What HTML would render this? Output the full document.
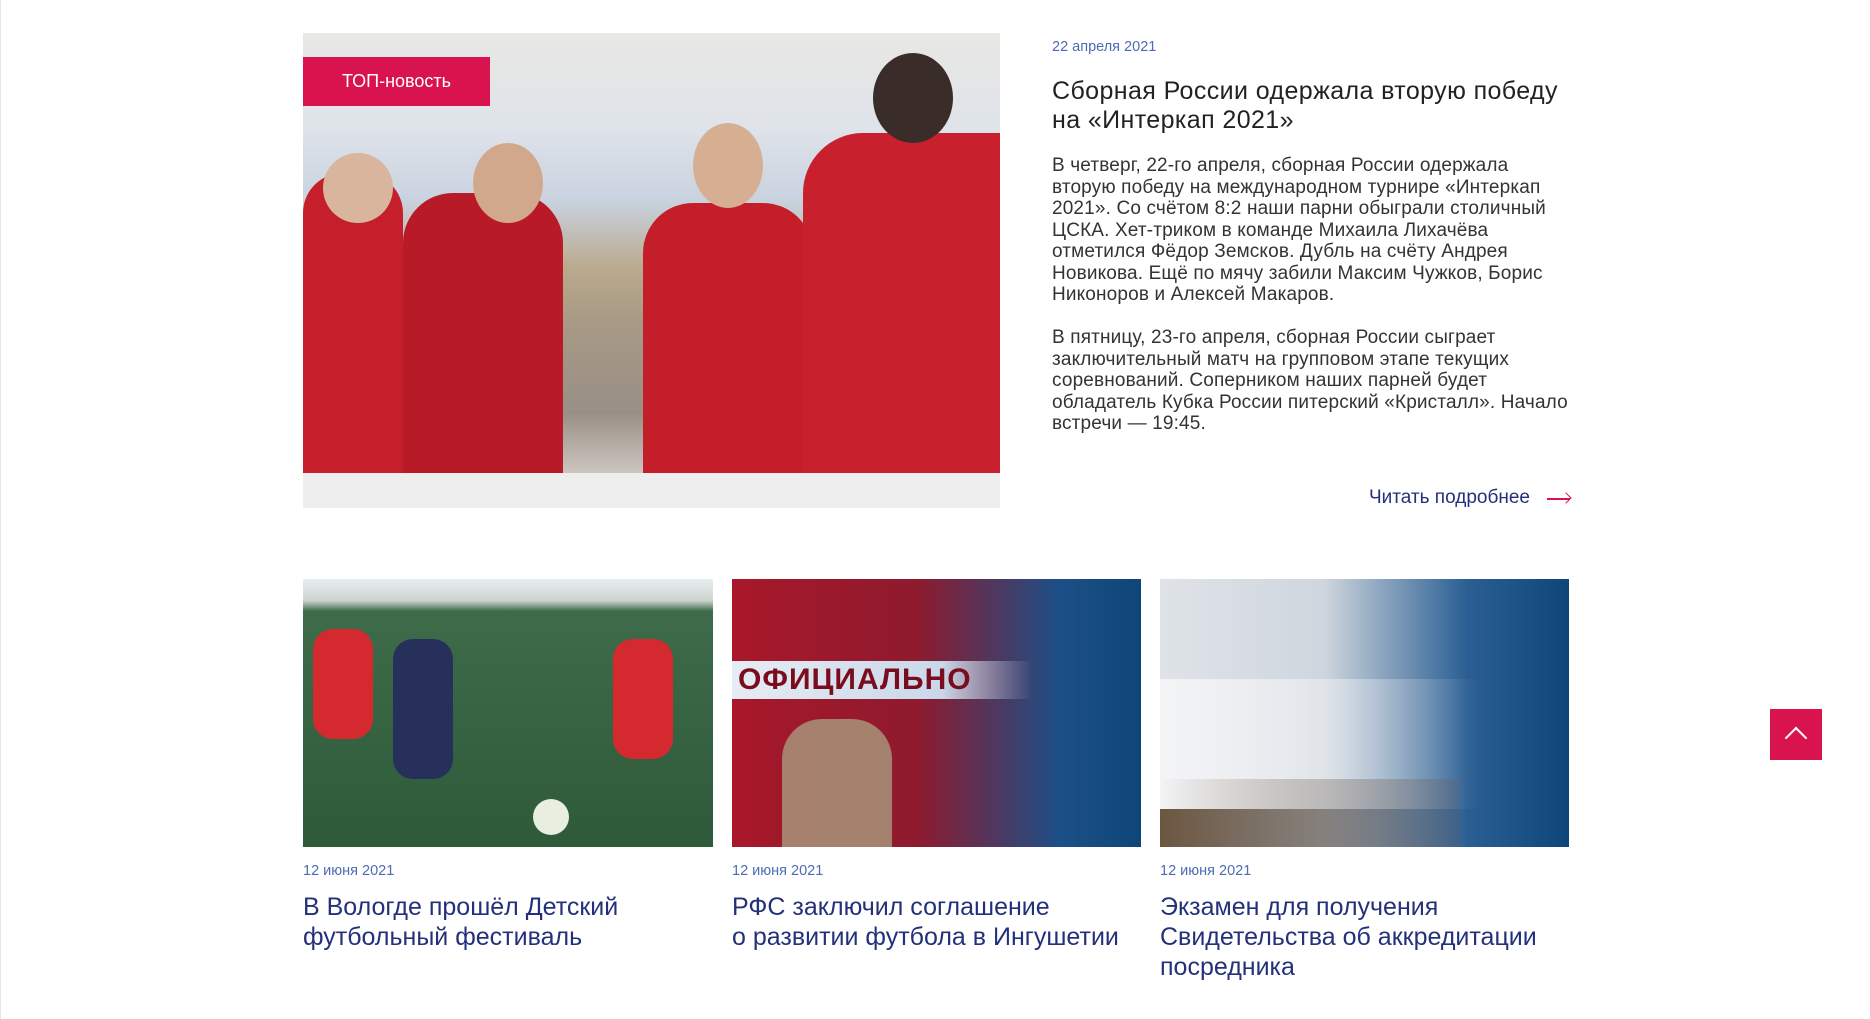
<!DOCTYPE html>
<html><head><meta charset="utf-8"><style>
*{margin:0;padding:0;box-sizing:border-box}
body{width:1870px;height:1019px;background:#fff;font-family:"Liberation Sans",sans-serif;position:relative;overflow:hidden;border-left:1px solid #e6e6e6}
.abs{position:absolute}
.main{left:302px;top:33px;width:697px;height:475px;background:linear-gradient(180deg,#e8e8e4 0%,#dfe3ea 20%,#c9d3e0 35%,#b9a98c 50%,#a89a85 60%,#9a8f86 80%,#e9e6e2 100%);overflow:hidden}
.badge{left:302px;top:57px;width:187px;height:49px;background:#d8134d;color:#fff;font-size:18px;line-height:49px;text-align:center}
.date{color:#4d6bb3;font-size:14.5px}
.title{color:#222;font-size:25px;line-height:29px;letter-spacing:.4px;white-space:nowrap}
.body{color:#333;font-size:19px;line-height:21.5px;letter-spacing:.15px;white-space:nowrap}
.ct{color:#24317a;font-size:25px;line-height:30px;white-space:nowrap}
.card{top:579px;width:410px;height:268px;overflow:hidden}
</style></head><body>
<div class="abs main">
 <div class="abs" style="left:0;top:140px;width:100px;height:340px;background:#c51f2c;border-radius:40px 40px 0 0"></div>
 <div class="abs" style="left:100px;top:160px;width:160px;height:320px;background:#b81a28;border-radius:50px 50px 0 0"></div>
 <div class="abs" style="left:340px;top:170px;width:170px;height:310px;background:#c41e2b;border-radius:50px 50px 0 0"></div>
 <div class="abs" style="left:500px;top:100px;width:202px;height:380px;background:#c9202d;border-radius:60px 0 0 0"></div>
 <div class="abs" style="left:20px;top:120px;width:70px;height:70px;background:#d8b59c;border-radius:50%"></div>
 <div class="abs" style="left:170px;top:110px;width:70px;height:80px;background:#d2a88c;border-radius:50%"></div>
 <div class="abs" style="left:390px;top:90px;width:70px;height:85px;background:#d6ae92;border-radius:50%"></div>
 <div class="abs" style="left:570px;top:20px;width:80px;height:90px;background:#3a2c28;border-radius:50%"></div>
 <div class="abs" style="left:0;top:440px;width:702px;height:40px;background:#eee"></div>
</div>
<div class="abs badge">ТОП-новость</div>
<div class="abs date" style="left:1051px;top:39px">22 апреля 2021</div>
<div class="abs title" style="left:1051px;top:77px">Сборная России одержала вторую победу<br>на «Интеркап 2021»</div>
<div class="abs body" style="left:1051px;top:155px">В четверг, 22-го апреля, сборная России одержала<br>вторую победу на международном турнире «Интеркап<br>2021». Со счётом 8:2 наши парни обыграли столичный<br>ЦСКА. Хет-триком в команде Михаила Лихачёва<br>отметился Фёдор Земсков. Дубль на счёту Андрея<br>Новикова. Ещё по мячу забили Максим Чужков, Борис<br>Никоноров и Алексей Макаров.</div>
<div class="abs body" style="left:1051px;top:327px">В пятницу, 23-го апреля, сборная России сыграет<br>заключительный матч на групповом этапе текущих<br>соревнований. Соперником наших парней будет<br>обладатель Кубка России питерский «Кристалл». Начало<br>встречи — 19:45.</div>
<div class="abs" style="left:1368px;top:487px;color:#24317a;font-size:19px">Читать подробнее</div>
<div class="abs" style="left:1546px;top:498px;width:23px;height:1.5px;background:#d8134d"></div>
<div class="abs" style="left:1561px;top:494px;width:8px;height:8px;border-top:1.5px solid #d8134d;border-right:1.5px solid #d8134d;transform:rotate(45deg)"></div>

<div class="abs card" style="left:302px;background:linear-gradient(180deg,#e8eef0 0%,#cdd5d0 8%,#3e6b4a 12%,#356241 60%,#2f5a3a 100%)">
 <div class="abs" style="left:10px;top:50px;width:60px;height:110px;background:#d42a2f;border-radius:20px"></div>
 <div class="abs" style="left:90px;top:60px;width:60px;height:140px;background:#27305a;border-radius:20px"></div>
 <div class="abs" style="left:310px;top:60px;width:60px;height:120px;background:#d42a2f;border-radius:20px"></div>
 <div class="abs" style="left:230px;top:220px;width:36px;height:36px;background:#e8eee0;border-radius:50%"></div>
</div>
<div class="abs card" style="left:731px;width:409px;background:linear-gradient(90deg,#a8182a 0%,#8f1a2e 45%,#1c4f87 80%,#0e4679 100%)">
 <div class="abs" style="left:0;top:82px;width:300px;height:38px;background:linear-gradient(90deg,#e6ecf3,#c9d8ea 70%,rgba(200,215,235,0))"></div>
 <div class="abs" style="left:6px;top:82px;font-size:30px;font-weight:bold;color:#7a0c1e;line-height:38px;letter-spacing:1px">ОФИЦИАЛЬНО</div>
 <div class="abs" style="left:50px;top:140px;width:110px;height:130px;background:#a99b7e;border-radius:40px 40px 0 0;opacity:.8"></div>
</div>
<div class="abs card" style="left:1159px;width:409px;background:linear-gradient(90deg,#dfe3e8 0%,#cfd6de 40%,#2b5f93 75%,#0e4679 100%)">
 <div class="abs" style="left:0;top:200px;width:300px;height:70px;background:linear-gradient(90deg,#6b5640,rgba(80,90,110,.4))"></div>
 <div class="abs" style="left:0;top:100px;width:320px;height:130px;background:linear-gradient(90deg,#f3f4f6,rgba(240,242,245,0))"></div>
</div>
<div class="abs date" style="left:302px;top:863px">12 июня 2021</div>
<div class="abs date" style="left:731px;top:863px">12 июня 2021</div>
<div class="abs date" style="left:1159px;top:863px">12 июня 2021</div>
<div class="abs ct" style="left:302px;top:892px">В Вологде прошёл Детский<br>футбольный фестиваль</div>
<div class="abs ct" style="left:731px;top:892px">РФС заключил соглашение<br>о развитии футбола в Ингушетии</div>
<div class="abs ct" style="left:1159px;top:892px">Экзамен для получения<br>Свидетельства об аккредитации<br>посредника</div>

<div class="abs" style="left:1769px;top:709px;width:52px;height:51px;background:#d8134d"></div>
<div class="abs" style="left:1787px;top:730px;width:16px;height:16px;border-top:2px solid #fff;border-left:2px solid #fff;transform:rotate(45deg)"></div>
</body></html>
